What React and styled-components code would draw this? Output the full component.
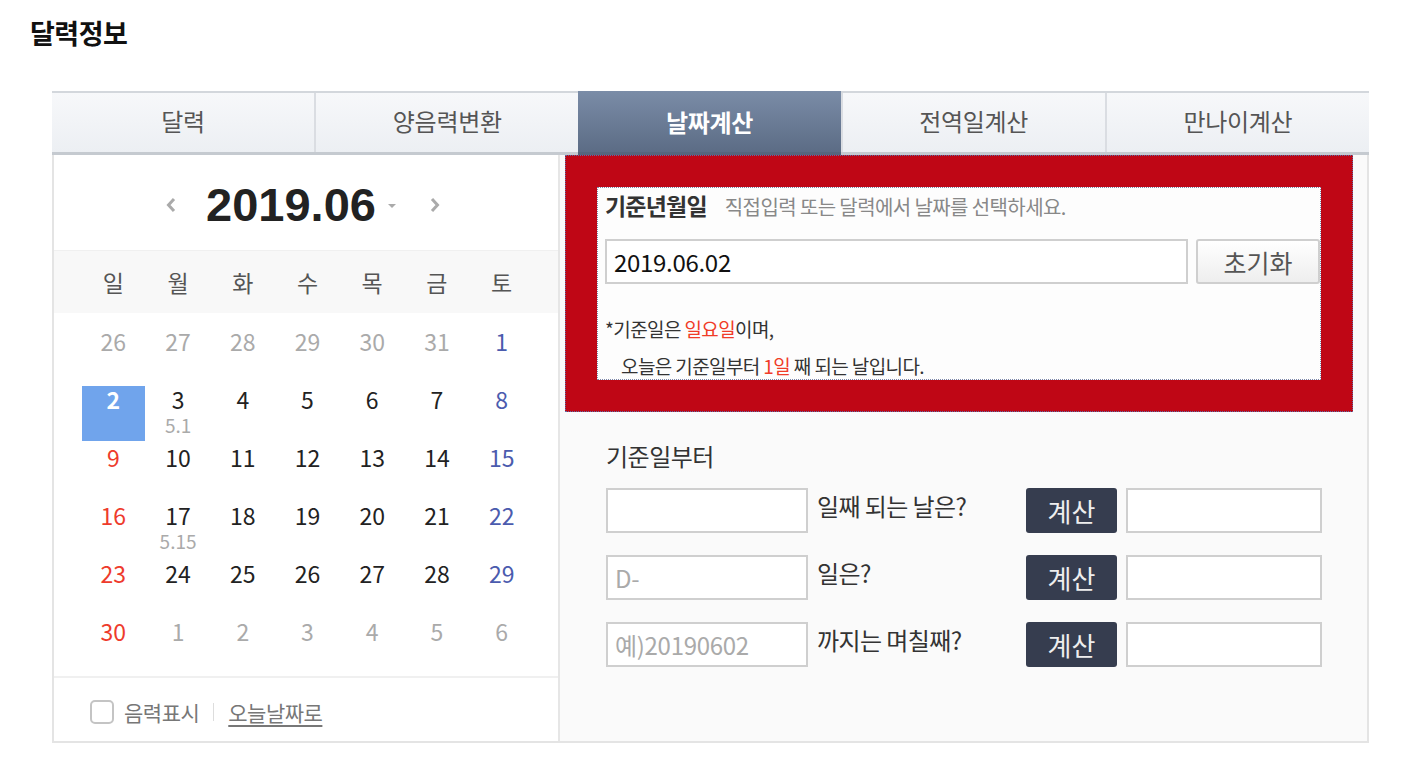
import React, { useState } from "react";
import styled, { createGlobalStyle } from "styled-components";

const GlobalStyle = createGlobalStyle`
  html, body {
    margin: 0;
    padding: 0;
    background: #fff;
  }
  body {
    font-family: "Noto Sans CJK KR", "Noto Sans", sans-serif;
    color: #222;
  }
  * {
    box-sizing: border-box;
  }
`;

const Page = styled.div`
  padding: 14px 0 0 30px;
  width: 1408px;
`;

const PageTitle = styled.h2`
  margin: 0;
  font-size: 27px;
  line-height: 38px;
  font-weight: 700;
  letter-spacing: -0.5px;
  color: #111;
`;

const Widget = styled.div`
  margin: 39px 0 0 22px;
  width: 1317px;
  border-left: 2px solid #e4e4e4;
  border-right: 2px solid #e4e4e4;
  border-bottom: 2px solid #e4e4e4;
`;

const TabBar = styled.ul`
  display: flex;
  margin: 0 -2px;
  padding: 0;
  list-style: none;
  height: 64px;
  border-top: 2px solid #d3d7dc;
  border-bottom: 3px solid #c5cad0;
  background: linear-gradient(#f7f8fa, #eceff3);
`;

const Tab = styled.li`
  flex: 1;
  display: flex;
  align-items: center;
  justify-content: center;
  padding-bottom: 5px;
  font-size: 24px;
  letter-spacing: -0.3px;
  color: ${(props) => (props.$active ? "#fff" : "#555")};
  font-weight: ${(props) => (props.$active ? 700 : 400)};
  border-left: 2px solid #dadde2;
  cursor: pointer;
  ${(props) =>
    props.$active &&
    `
    margin: -2px 0 -3px;
    padding-bottom: 0;
    border-left: 0;
    background: linear-gradient(#7a8ca7, #5c6c85);
    border-bottom: 3px solid #56657c;
  `}

  &:first-child {
    border-left: 0;
  }
`;

const Body = styled.div`
  display: flex;
`;

const CalendarPanel = styled.div`
  width: 506px;
  border-right: 2px solid #e6e6e6;
  background: #fff;
`;

const MonthHeader = styled.div`
  height: 95px;
  display: flex;
  align-items: center;
  justify-content: center;
  padding: 4px 6px 0 0;
`;

const Arrow = styled.button`
  border: 0;
  background: none;
  padding: 0;
  width: 14px;
  display: flex;
  justify-content: center;
  cursor: pointer;
`;

const MonthText = styled.div`
  font-family: "Liberation Sans", "Noto Sans", sans-serif;
  font-size: 47px;
  line-height: 50px;
  font-weight: 700;
  color: #222;
  margin: 0 0 0 28px;
`;

const Caret = styled.span`
  width: 0;
  height: 0;
  border-left: 4px solid transparent;
  border-right: 4px solid transparent;
  border-top: 4px solid #aaa;
  margin: 2px 32px 0 12px;
`;

const WeekHeader = styled.div`
  display: grid;
  grid-template-columns: repeat(7, 1fr);
  height: 63px;
  align-items: center;
  width: 100%;
  padding: 0 24px 0 27px;
  background: #f8f8f8;
  border-top: 1px solid #f0f0f0;
`;

const WeekDay = styled.div`
  text-align: center;
  font-size: 23px;
  color: #555;
`;

const Grid = styled.div`
  display: grid;
  grid-template-columns: repeat(7, 1fr);
  grid-auto-rows: 58px;
  padding: 15px 24px 0 27px;
`;

const Day = styled.div`
  display: flex;
  flex-direction: column;
  align-items: center;
  margin: 0 1px 3px;
  background: ${(props) => (props.$selected ? "#70a4ec" : "transparent")};
  color: ${(props) =>
    props.$selected
      ? "#fff"
      : props.$muted
      ? "#aaa"
      : props.$sun
      ? "#ee3b2c"
      : props.$sat
      ? "#4b5bae"
      : "#222"};
  font-weight: ${(props) => (props.$selected ? 700 : 400)};
  font-size: 23px;
  line-height: 26px;
  cursor: pointer;
`;

const Lunar = styled.span`
  font-size: 19px;
  line-height: 22px;
  margin-top: 2px;
  color: #aaa;
  font-weight: 400;
`;

const CalendarFooter = styled.div`
  display: flex;
  align-items: center;
  height: 65px;
  padding: 4px 0 0 36px;
  border-top: 2px solid #f0f0f0;
  font-size: 21px;
  color: #777;
  letter-spacing: -0.5px;
`;

const CheckBox = styled.span`
  width: 24px;
  height: 24px;
  border: 2px solid #c4c4c4;
  border-radius: 5px;
  background: #fff;
  margin-right: 10px;
`;

const Divider = styled.span`
  width: 1px;
  height: 18px;
  background: #ddd;
  margin: 0 14px;
`;

const TodayLink = styled.a`
  color: #777;
  text-decoration: underline;
  text-underline-offset: 4px;
  cursor: pointer;
`;

const CalcPanel = styled.div`
  flex: 1;
  background: #fafafa;
`;

const Highlight = styled.div`
  margin-left: 5px;
  width: 788px;
  height: 257px;
  padding: 31px;
  background: #bf0615;
  border: 1px dotted #5a6ea8;
`;

const BaseBox = styled.div`
  height: 193px;
  background: #fdfdfd;
  border: 1px dotted #7e88aa;
  padding: 0 0 0 7px;
  overflow: hidden;
`;

const BaseTitle = styled.div`
  display: flex;
  align-items: baseline;
  height: 32px;
`;

const BaseLabel = styled.strong`
  font-size: 23px;
  color: #333;
  letter-spacing: -0.8px;
  margin-right: 18px;
`;

const BaseHint = styled.span`
  font-size: 20px;
  color: #888;
  letter-spacing: -0.6px;
`;

const BaseRow = styled.div`
  display: flex;
  margin-top: 19px;
  gap: 8px;
`;

const TextInput = styled.input`
  width: ${(props) => props.$width}px;
  height: 45px;
  border: 2px solid #cfcfcf;
  background: #fff;
  padding: 0 7px;
  font-family: "Noto Sans CJK KR", "Noto Sans", sans-serif;
  font-size: 24px;
  letter-spacing: -0.3px;
  color: #111;
  outline: none;

  &::placeholder {
    color: #aaa;
  }
`;

const ResetButton = styled.button`
  width: 124px;
  height: 45px;
  border: 2px solid #cfcfcf;
  border-radius: 3px;
  background: linear-gradient(#fff, #eeeeee);
  font-family: "Noto Sans CJK KR", "Noto Sans", sans-serif;
  font-size: 25px;
  color: #555;
  cursor: pointer;
`;

const Note = styled.p`
  margin: 26px 0 0;
  font-size: 19px;
  line-height: 37px;
  color: #333;
  letter-spacing: -0.6px;
`;

const NoteIndent = styled.span`
  display: block;
  padding-left: 16px;
`;

const Red = styled.span`
  color: #f03c28;
`;

const FromSection = styled.div`
  padding: 26px 0 0 46px;
`;

const SectionTitle = styled.div`
  font-size: 24px;
  color: #333;
  letter-spacing: -0.5px;
  line-height: 36px;
  margin-bottom: 14px;
`;

const CalcRow = styled.div`
  display: grid;
  grid-template-columns: 202px 200px 91px 196px;
  column-gap: 9px;
  align-items: start;
  margin-bottom: 22px;
`;

const RowLabel = styled.span`
  font-size: 24px;
  color: #333;
  letter-spacing: -0.6px;
  line-height: 36px;
`;

const CalcButton = styled.button`
  height: 45px;
  border: 0;
  border-radius: 3px;
  background: #363d4f;
  color: #eee;
  font-family: "Noto Sans CJK KR", "Noto Sans", sans-serif;
  font-size: 26px;
  cursor: pointer;
`;

const ChevronLeft = () => (
  <svg width="12" height="16" viewBox="0 0 12 16">
    <path d="M9 2 L3.5 8 L9 14" fill="none" stroke="#aaa" strokeWidth="3" />
  </svg>
);

const ChevronRight = () => (
  <svg width="12" height="16" viewBox="0 0 12 16">
    <path d="M3 2 L8.5 8 L3 14" fill="none" stroke="#aaa" strokeWidth="3" />
  </svg>
);

const tabs = ["달력", "양음력변환", "날짜계산", "전역일계산", "만나이계산"];
const weekDays = ["일", "월", "화", "수", "목", "금", "토"];

const days = [
  [26, 27, 28, 29, 30, 31, 1],
  [2, 3, 4, 5, 6, 7, 8],
  [9, 10, 11, 12, 13, 14, 15],
  [16, 17, 18, 19, 20, 21, 22],
  [23, 24, 25, 26, 27, 28, 29],
  [30, 1, 2, 3, 4, 5, 6],
];

const lunar = { "1-1": "5.1", "3-1": "5.15" };

const calcRows = [
  { placeholder: "", label: "일째 되는 날은?" },
  { placeholder: "D-", label: "일은?" },
  { placeholder: "예)20190602", label: "까지는 며칠째?" },
];

export default function App() {
  const [activeTab, setActiveTab] = useState(2);
  const [baseDate, setBaseDate] = useState("2019.06.02");

  return (
    <Page>
      <GlobalStyle />
      <PageTitle>달력정보</PageTitle>
      <Widget>
        <TabBar>
          {tabs.map((tab, i) => (
            <Tab key={tab} $active={i === activeTab} onClick={() => setActiveTab(i)}>
              {tab}
            </Tab>
          ))}
        </TabBar>
        <Body>
          <CalendarPanel>
            <MonthHeader>
              <Arrow>
                <ChevronLeft />
              </Arrow>
              <MonthText>2019.06</MonthText>
              <Caret />
              <Arrow>
                <ChevronRight />
              </Arrow>
            </MonthHeader>
            <WeekHeader>
              {weekDays.map((d) => (
                <WeekDay key={d}>{d}</WeekDay>
              ))}
            </WeekHeader>
            <Grid>
              {days.map((week, r) =>
                week.map((day, c) => {
                  const muted = (r === 0 && c < 6) || (r === 5 && c > 0);
                  return (
                    <Day
                      key={`${r}-${c}`}
                      $muted={muted}
                      $sun={c === 0}
                      $sat={c === 6}
                      $selected={r === 1 && c === 0}
                    >
                      {day}
                      {lunar[`${r}-${c}`] && <Lunar>{lunar[`${r}-${c}`]}</Lunar>}
                    </Day>
                  );
                })
              )}
            </Grid>
            <CalendarFooter>
              <CheckBox />
              음력표시
              <Divider />
              <TodayLink>오늘날짜로</TodayLink>
            </CalendarFooter>
          </CalendarPanel>
          <CalcPanel>
            <Highlight>
              <BaseBox>
                <BaseTitle>
                  <BaseLabel>기준년월일</BaseLabel>
                  <BaseHint>직접입력 또는 달력에서 날짜를 선택하세요.</BaseHint>
                </BaseTitle>
                <BaseRow>
                  <TextInput
                    $width={584}
                    value={baseDate}
                    onChange={(e) => setBaseDate(e.target.value)}
                  />
                  <ResetButton onClick={() => setBaseDate("")}>초기화</ResetButton>
                </BaseRow>
                <Note>
                  *기준일은 <Red>일요일</Red>이며,
                  <NoteIndent>
                    오늘은 기준일부터 <Red>1일</Red> 째 되는 날입니다.
                  </NoteIndent>
                </Note>
              </BaseBox>
            </Highlight>
            <FromSection>
              <SectionTitle>기준일부터</SectionTitle>
              {calcRows.map((row) => (
                <CalcRow key={row.label}>
                  <TextInput $width={202} placeholder={row.placeholder} />
                  <RowLabel>{row.label}</RowLabel>
                  <CalcButton>계산</CalcButton>
                  <TextInput $width={196} />
                </CalcRow>
              ))}
            </FromSection>
          </CalcPanel>
        </Body>
      </Widget>
    </Page>
  );
}
